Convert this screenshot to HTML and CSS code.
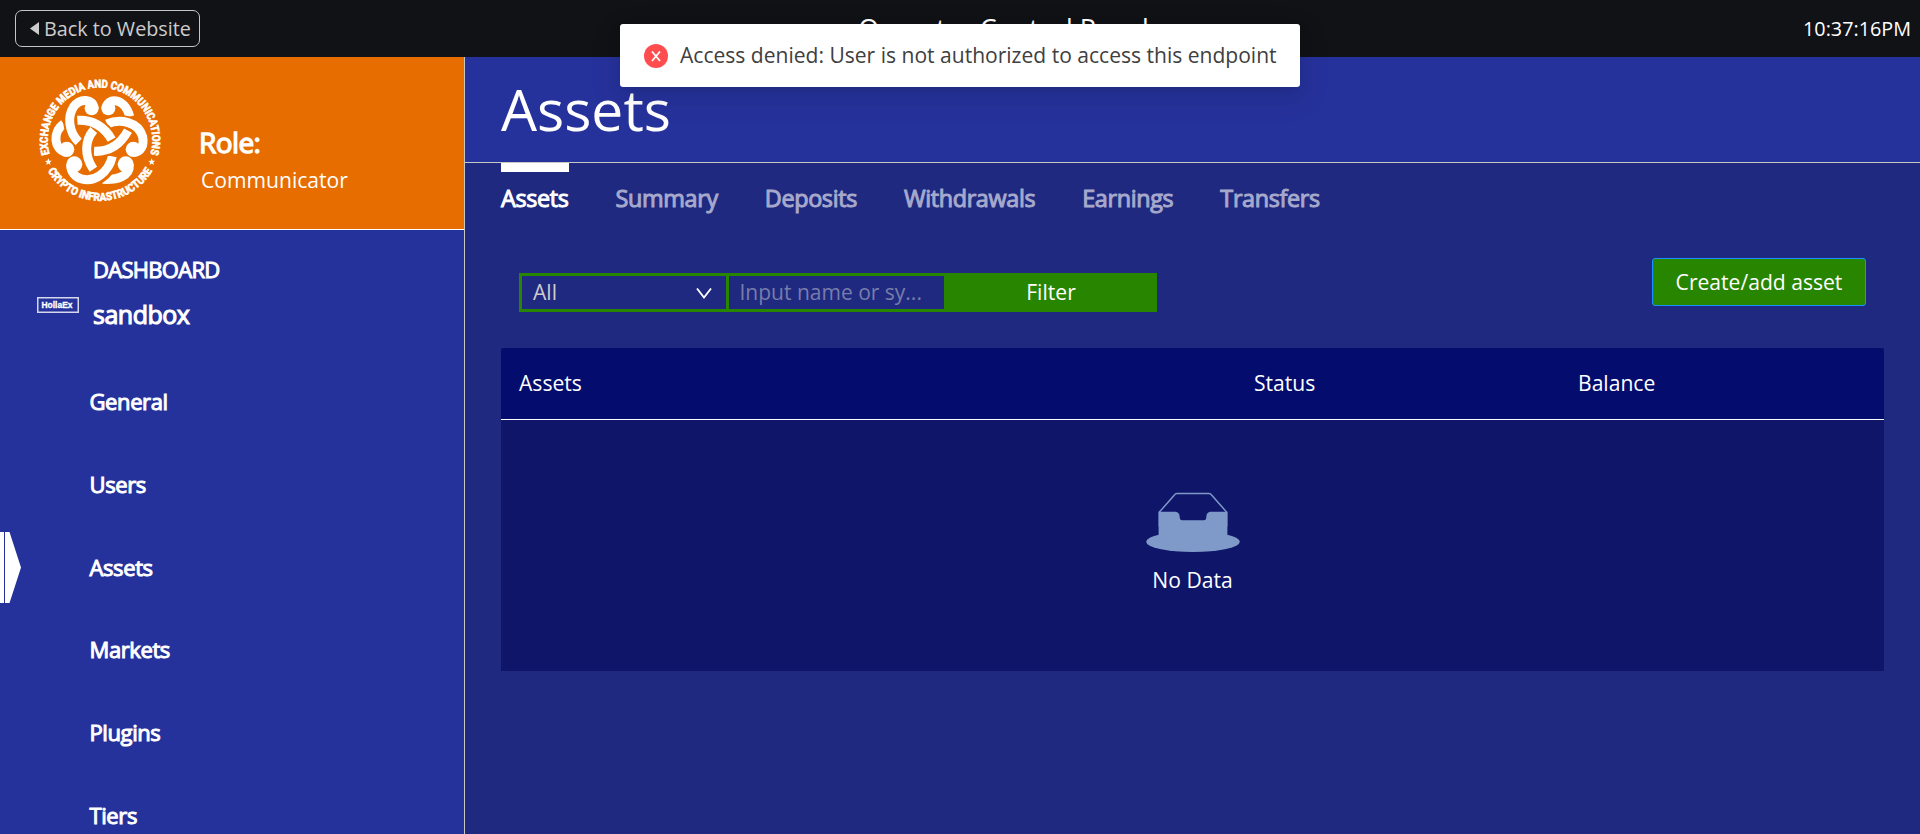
FILE: index.html
```html
<!DOCTYPE html>
<html lang="en">
<head>
<meta charset="utf-8">
<title>Operator Control Panel</title>
<link rel="stylesheet" href="styles.css">
</head>
<body>
<header class="topbar">
  <a class="back"><svg class="caret" viewBox="0 0 9 13"><path d="M9 0v13L0 6.500z"/></svg>Back to Website</a>
  <div class="panel-title">Operator Control Panel</div>
  <div class="clock">10:37:16PM</div>
</header>
<div class="layout">
  <aside class="sidebar">
    <section class="role">
      <svg class="seal" viewBox="0 0 420 420">
        <defs>
          <path id="arc-top" d="M60 256 A157 157 0 1 1 360 256"/>
          <path id="arc-bottom" d="M46 288 A181 181 0 0 0 374 288"/>
        </defs>
        <g class="seal-text">
          <text><textPath href="#arc-top" startOffset="50%" text-anchor="middle" textLength="580" lengthAdjust="spacingAndGlyphs">EXCHANGE MEDIA AND COMMUNICATIONS</textPath></text>
          <text><textPath href="#arc-bottom" startOffset="50%" text-anchor="middle" textLength="379" lengthAdjust="spacingAndGlyphs">CRYPTO INFRASTRUCTURE</textPath></text>
        </g>
        <path class="strand" d="M228 116C230 82 284 80 299 140"/>
        <path class="strand" d="M101 162C66 186 72 240 108 247"/>
        <path class="strand" d="M298 284C300 318 262 331 218 328"/>
        <path class="casing" d="M131 110C112 138 115 186 146 216"/>
        <path class="strand" d="M192 116C190 84 150 84 131 110C112 138 115 186 146 216"/>
        <path class="casing" d="M175 329C210 330 242 300 247 262"/>
        <path class="strand" d="M122 284C122 328 175 342 210 316C232 300 242 282 247 259"/>
        <path class="casing" d="M234 163C270 145 325 155 338 200"/>
        <path class="strand" d="M231 162C270 145 325 155 338 200C343 228 332 246 312 247"/>
        <path class="casing" d="M192 244C238 246 270 226 294 182"/>
        <path class="strand" d="M192 244C238 246 270 226 294 182"/>
        <path class="casing" d="M142 151C186 148 224 170 245 209"/>
        <path class="strand" d="M142 151C186 148 224 170 245 209"/>
        <path class="casing" d="M191 180C164 212 162 256 190 298"/>
        <path class="strand" d="M191 180C164 212 162 256 190 298"/>
        <g class="seal-fill">
          <path d="M55 265l3 7 7.500.5-5.800 4.900 2 7.500-6.700-4.100-6.200 4.300 1.800-7.500-6-4.700 7.500-.7z"/>
          <path d="M365 265l3 7 7.500.5-5.800 4.900 2 7.500-6.700-4.100-6.200 4.300 1.800-7.500-6-4.700 7.500-.7z"/>
          <circle cx="185" cy="115" r="21"/><circle cx="235" cy="115" r="21"/>
          <circle cx="110" cy="238" r="23"/><circle cx="310" cy="238" r="23"/>
          <circle cx="133" cy="283" r="24"/><circle cx="287" cy="283" r="24"/>
        </g>
      </svg>
      <div class="role-text"><div class="role-label">Role:</div><div class="role-name">Communicator</div></div>
    </section>
    <section class="brand">
      <svg class="brand-logo" viewBox="0 0 42 16"><rect x=".75" y=".75" width="40.500" height="14.500"/><text x="4.500" y="11" textLength="31" lengthAdjust="spacingAndGlyphs">HollaEx</text></svg>
      <div class="brand-text"><div class="brand-dash">DASHBOARD</div><div class="brand-name">sandbox</div></div>
    </section>
    <nav class="menu">
      <a>General</a><a>Users</a>
      <a class="current">Assets<svg class="marker" viewBox="0 0 21 71"><path d="M0 0h4v71H0zM5 0h4.500L21 35.500 9.500 71H5z"/></svg></a>
      <a>Markets</a><a>Plugins</a><a>Tiers</a>
    </nav>
  </aside>
  <main class="main">
    <h1 class="title">Assets</h1>
    <div class="tabs"><a class="on">Assets</a><a>Summary</a><a>Deposits</a><a>Withdrawals</a><a>Earnings</a><a>Transfers</a></div>
    <div class="tools">
      <div class="filter">
        <div class="select">All<svg class="chev" viewBox="0 0 16 11"><path d="M1 .5l7 9L15 .5"/></svg></div>
        <div class="input">Input name or sy...</div>
        <div class="go">Filter</div>
      </div>
      <div class="create">Create/add asset</div>
    </div>
    <div class="table">
      <div class="thead"><span>Assets</span><span>Status</span><span>Balance</span></div>
      <div class="empty">
        <svg class="empty-art" viewBox="0 0 64 41"><g transform="translate(0 1)"><ellipse cx="32" cy="33" rx="32" ry="7"/><path class="line" d="M55 12.760L44.854 1.258C44.367.474 43.656 0 42.907 0H21.093c-.749 0-1.460.474-1.947 1.257L9 12.761V22h46v-9.240z"/><path class="line-box" d="M41.613 15.931c0-1.605.994-2.930 2.227-2.931H55v18.137C55 33.260 53.680 35 52.050 35h-40.100C10.320 35 9 33.259 9 31.137V13h11.160c1.233 0 2.227 1.323 2.227 2.928v.022c0 1.605 1.005 2.901 2.237 2.901h14.752c1.232 0 2.237-1.308 2.237-2.913v-.007z"/></g></svg>
        <div class="empty-text">No Data</div>
      </div>
    </div>
  </main>
</div>
<div class="toast"><svg class="error" viewBox="0 0 24 24"><circle cx="12" cy="12" r="12"/><path d="M8 7.500l8 9.500M16 7.500L8 17"/></svg><span>Access denied: User is not authorized to access this endpoint</span></div>
</body>
</html>
```
FILE: styles.css
```css
* { box-sizing: border-box; }
body { margin: 0; height: 834px; overflow: hidden; position: relative; background: #202980; color: #fff; font: 21.100px/30px "Open Sans", "Noto Sans", sans-serif; white-space: nowrap; }
.topbar { height: 57px; background: #111216; display: flex; justify-content: space-between; align-items: center; padding: 0 9px 0 15px; }
.back { width: 185px; height: 37px; border: 1px solid #c6c6c6; border-radius: 7px; color: #ccc; font-size: 19.800px; display: flex; align-items: center; gap: 5px; padding-left: 14px; }
.caret { width: 9px; height: 13px; fill: #ccc; }
.panel-title { font-size: 26.800px; padding-left: 4px; }
.clock { font-size: 19.800px; }
.layout { display: flex; height: 777px; }
.sidebar { width: 465px; background: #26329b; border-right: 1px solid #c8c8c0; }
.role { height: 173px; background: #e76d00; border-bottom: 1px solid #fff; display: flex; padding: 13px 0 0 30px; }
.seal { width: 140px; height: 140px; }
.seal-text { font: bold 33px "Roboto", sans-serif; fill: #fff; stroke: #fff; stroke-width: 2; }
.seal-fill { fill: #fff; }
.strand { fill: none; stroke: #fff; stroke-width: 27; }
.casing { fill: none; stroke: #e76d00; stroke-width: 39; }
.role-text { padding: 53px 0 0 29px; }
.role-label { font-size: 28px; line-height: 38px; letter-spacing: -.6px; -webkit-text-stroke: 1.300px #fff; }
.role-name { padding-left: 2px; margin-top: 4px; }
.brand { display: flex; height: 136.400px; padding: 25px 0 0 37px; }
.brand-logo { width: 42px; height: 16px; margin: 42px 14px 0 0; }
.brand-logo rect { fill: none; stroke: #d5d7ec; stroke-width: 1.500; }
.brand-logo text { font: bold 8.500px "Liberation Sans", sans-serif; fill: #fff; stroke: #fff; stroke-width: .3; }
.brand-dash { font-size: 22px; letter-spacing: -.7px; line-height: 29px; -webkit-text-stroke: 1px #fff; }
.brand-name { font-size: 25px; line-height: 36px; margin-top: 12px; letter-spacing: -.5px; -webkit-text-stroke: 1.100px #fff; }
.menu { display: flex; flex-direction: column; }
.menu a { height: 82.800px; flex: none; padding: 19.600px 0 0 89.500px; font-size: 22px; letter-spacing: -.4px; -webkit-text-stroke: 1px #fff; position: relative; }
.marker { position: absolute; left: 0; top: 0; width: 21px; height: 71px; fill: #fff; stroke: none; }
.main { flex: 1; }
.title { margin: 0; height: 106px; padding: 14px 0 0 36px; background: #26329b; border-bottom: 1px solid #c8c8c0; font-weight: 400; font-size: 57px; line-height: 76px; }
.tabs { display: flex; gap: 47px; padding-left: 36px; height: 95px; font-size: 23.400px; letter-spacing: -.36px; }
.tabs a { color: #a6a9cc; padding-top: 20px; -webkit-text-stroke: 1px currentColor; }
.tabs .on { color: #fff; padding-top: 11px; border-top: 9px solid #fff; }
.tools { display: flex; justify-content: space-between; height: 90px; padding: 0 54px; }
.filter { display: flex; margin-top: 15px; width: 638px; height: 39px; background: #288500; padding: 3px; line-height: 32px; }
.select { width: 204px; background: #202980; color: #ccc; padding: 0 14px 0 11px; display: flex; justify-content: space-between; }
.chev { width: 16px; height: 11px; margin-top: 12px; fill: none; stroke: #fff; stroke-width: 1.800; }
.input { width: 215px; margin-left: 3px; background: #202980; color: #777da9; padding-left: 10.500px; font-size: 21px; }
.go { flex: 1; text-align: center; padding-left: 4px; }
.create { width: 214px; height: 48px; background: #288500; border: 1px solid #1890ff; border-radius: 3px; text-align: center; line-height: 45px; }
.table { margin: 0 36px; height: 323px; background: #0f1669; }
.thead { display: grid; grid-template-columns: 735px 324px 1fr; padding-left: 18px; height: 72px; line-height: 69px; background: #040c6d; border-bottom: 1px solid #fff; border-radius: 5px 5px 0 0; }
.empty { display: flex; flex-direction: column; align-items: center; padding-top: 72px; }
.empty-art { width: 94px; height: 60px; fill: #7f9ac9; }
.line, .line-box { stroke: #7f9ac9; }
.line { fill: none; }
.empty-text { margin-top: 13px; }
.toast { position: absolute; left: 620px; top: 24px; width: 680px; height: 63px; background: #fff; color: #404040; font-size: 21.050px; border-radius: 3px; box-shadow: 0 9px 28px 8px rgba(0,0,0,.05), 0 6px 16px rgba(0,0,0,.08), 0 3px 6px -4px rgba(0,0,0,.12); display: flex; align-items: center; gap: 12px; padding: 0 0 1px 24px; }
.error { width: 24px; height: 24px; flex: none; margin-top: 2px; }
.error circle { fill: #ff4d4f; }
.error path { fill: none; stroke: #fff; stroke-width: 1.800; }
```
